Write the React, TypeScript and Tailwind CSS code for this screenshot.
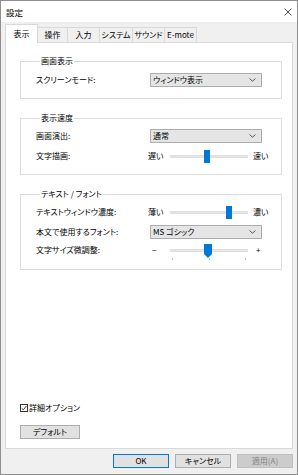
import React, { useState } from 'react';

const font = "[font-family:'Noto_Sans_CJK_JP','Noto_Sans',sans-serif] [font-feature-settings:'palt']";

function Chevron() {
  return (
    <svg width="7" height="4" viewBox="0 0 7 4" className="shrink-0">
      <path d="M0.5 0.5 L3.5 3.2 L6.5 0.5" fill="none" stroke="#444" strokeWidth="0.9" />
    </svg>
  );
}

function Select({ value }: { value: string }) {
  return (
    <div className="ml-[2px] w-[112px] h-[14px] bg-[#e5e5e5] border border-[#adadad] flex items-center justify-between pl-[2px] pr-[5px]">
      <span>{value}</span>
      <Chevron />
    </div>
  );
}

function Slider({
  left,
  right,
  pos,
  ticks,
  leftPad = 0,
  rightPad = 5,
}: {
  left: string;
  right: string;
  pos: number;
  ticks?: boolean;
  leftPad?: number;
  rightPad?: number;
}) {
  return (
    <div className="flex flex-col">
      <div className="flex items-center h-[14px]">
        <span className="w-[22px]" style={{ paddingLeft: leftPad }}>{left}</span>
        <div className="relative w-[78px] h-[3px] bg-[#e7e7e7] border-y border-[#dedede]">
          {ticks ? (
            <svg
              width="8"
              height="14"
              viewBox="0 0 8 14"
              className="absolute -top-[6px]"
              style={{ left: pos }}
            >
              <path d="M0 0 H8 V10 L4 14 L0 10 Z" fill="#0078d7" />
            </svg>
          ) : (
            <div className="absolute -top-[6px] w-[6px] h-[13px] bg-[#0078d7]" style={{ left: pos }} />
          )}
        </div>
        <span style={{ paddingLeft: rightPad }}>{right}</span>
      </div>
      {ticks && (
        <div className="ml-[22px] w-[78px] flex justify-between px-[2px] mt-[1px]">
          <span className="w-px h-[2px] bg-[#bdbdbd]" />
          <span className="w-px h-[2px] bg-[#bdbdbd]" />
          <span className="w-px h-[2px] bg-[#bdbdbd]" />
        </div>
      )}
    </div>
  );
}

function Row({ label, children }: { label: string; children: React.ReactNode }) {
  return (
    <div className="flex items-start">
      <span className="w-[112px] h-[14px] flex items-center">{label}</span>
      {children}
    </div>
  );
}

function Group({ title, children, className = '' }: { title: string; children: React.ReactNode; className?: string }) {
  return (
    <fieldset className={`border border-[#dcdcdc] pl-[15px] ${className}`}>
      <legend className="ml-[4px] px-[1px] leading-[12px]">{title}</legend>
      {children}
    </fieldset>
  );
}

export default function App() {
  const [activeTab, setActiveTab] = useState('表示');
  const [details, setDetails] = useState(true);
  const tabs = [
    { id: '表示', w: 'w-[33px]' },
    { id: '操作', w: 'w-[30px]' },
    { id: '入力', w: 'w-[32px]' },
    { id: 'システム', w: 'w-[33px]' },
    { id: 'サウンド', w: 'w-[32px]' },
    { id: 'E-mote', w: 'w-[32px]' },
  ];

  return (
    <div className={`w-[298px] h-[475px] bg-[#f0f0f0] border border-[#8f8f8f] flex flex-col text-[8px] leading-[12px] text-black ${font}`}>
      {/* TITLE */}
      <div className="h-[21px] bg-white flex items-center justify-between pl-[5px] pr-[5px] shrink-0">
        <span className="text-[8.5px]">設定</span>
        <svg width="8" height="8" viewBox="0 0 8 8">
          <path d="M0.5 0.5 L7.5 7.5 M7.5 0.5 L0.5 7.5" stroke="#222" strokeWidth="0.8" />
        </svg>
      </div>

      <div className="flex-1 flex flex-col px-[4px]">
        {/* TABS */}
        <div className="flex items-end h-[20px] pt-[2px]">
          {tabs.map((t) =>
            activeTab === t.id ? (
              <button
                key={t.id}
                onClick={() => setActiveTab(t.id)}
                className={`${t.w} h-[19px] -mb-px bg-white border border-b-0 border-[#d9d9d9] flex items-start justify-center pt-[3px] relative z-10`}
              >
                {t.id}
              </button>
            ) : (
              <button
                key={t.id}
                onClick={() => setActiveTab(t.id)}
                className={`${t.w} h-[15px] bg-[#f0f0f0] border border-b-0 border-l-0 border-[#d9d9d9] flex items-center justify-center pb-[1px]`}
              >
                {t.id}
              </button>
            )
          )}
        </div>

        {/* PANEL */}
        <div className="h-[407px] bg-white border border-[#d9d9d9] flex flex-col pl-[14px] pr-[10px]">
          <Group title="画面表示" className="mt-[12px] pt-[6px] pb-[11px]">
            <Row label="スクリーンモード:">
              <Select value="ウィンドウ表示" />
            </Row>
          </Group>

          <Group title="表示速度" className="mt-[13px] pt-[5px] pb-[11px]">
            <div className="flex flex-col gap-[6px]">
              <Row label="画面演出:">
                <Select value="通常" />
              </Row>
              <Row label="文字描画:">
                <Slider left="遅い" right="速い" pos={34} />
              </Row>
            </div>
          </Group>

          <Group title="テキスト / フォント" className="mt-[13px] pt-[5px] pb-[9px]">
            <div className="flex flex-col">
              <Row label="テキストウィンドウ濃度:">
                <Slider left="薄い" right="濃い" pos={56} />
              </Row>
              <div className="mt-[6px]">
                <Row label="本文で使用するフォント:">
                  <Select value="MS ゴシック" />
                </Row>
              </div>
              <div className="mt-[4px]">
                <Row label="文字サイズ微調整:">
                  <Slider left="−" right="+" pos={34} ticks leftPad={4} rightPad={8} />
                </Row>
              </div>
            </div>
          </Group>

          <div className="mt-auto flex flex-col items-start pb-[9px]">
            <label className="flex items-center gap-[1px] h-[12px]">
              <button
                onClick={() => setDetails(!details)}
                className="w-[8px] h-[8px] border border-[#333] bg-white flex items-center justify-center"
              >
                {details && (
                  <svg width="6" height="6" viewBox="0 0 6 6">
                    <path d="M0.6 3.2 L2.3 4.8 L5.4 1" fill="none" stroke="#222" strokeWidth="0.9" />
                  </svg>
                )}
              </button>
              <span>詳細オプション</span>
            </label>
            <button className="mt-[11px] w-[60px] h-[14px] bg-[#e1e1e1] border border-[#adadad] flex items-center justify-center">
              デフォルト
            </button>
          </div>
        </div>

        {/* FOOTER */}
        <div className="flex justify-end gap-[6px] pt-[5px]">
          <button className="w-[56px] h-[14px] bg-[#e1e1e1] border border-[#0078d7] flex items-center justify-center">
            OK
          </button>
          <button className="w-[56px] h-[14px] bg-[#e1e1e1] border border-[#adadad] flex items-center justify-center">
            キャンセル
          </button>
          <button disabled className="w-[56px] h-[14px] bg-[#cccccc] border border-[#bfbfbf] text-[#838383] flex items-center justify-center">
            適用(A)
          </button>
        </div>
      </div>
    </div>
  );
}
